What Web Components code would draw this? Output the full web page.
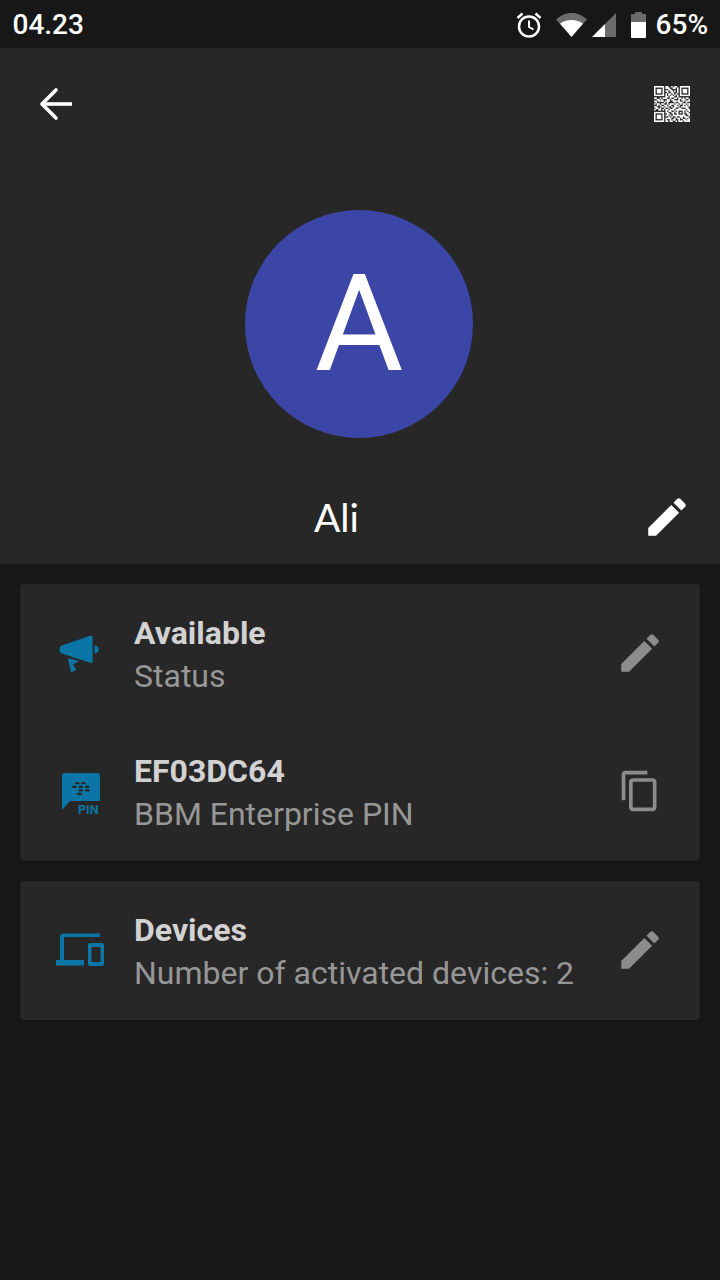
<!DOCTYPE html>
<html>
<head>
<meta charset="utf-8">
<title>Profile</title>
<style>
    html, body { margin: 0; padding: 0; background: #171717; }
    body { width: 720px; height: 1280px; overflow: hidden; font-family: Roboto, sans-serif; }
</style>
</head>
<body>
<status-bar time="04.23" battery="65%"></status-bar>
<profile-header name="Ali" initial="A"></profile-header>
<info-card>
    <info-row title="Available" subtitle="Status" icon="megaphone" action="edit"></info-row>
    <info-row title="EF03DC64" subtitle="BBM Enterprise PIN" icon="pin" action="copy"></info-row>
</info-card>
<info-card>
    <info-row title="Devices" subtitle="Number of activated devices: 2" icon="devices" action="edit"></info-row>
</info-card>

<script>
const PENCIL = 'M3 17.25V21h3.75L17.81 9.94l-3.75-3.75L3 17.25zM20.71 7.04c.39-.39.39-1.02 0-1.41l-2.34-2.34c-.39-.39-1.02-.39-1.41 0l-1.83 1.83 3.75 3.75 1.83-1.83z';
const COPY = 'M16 1H4c-1.1 0-2 .9-2 2v14h2V3h12V1zm3 4H8c-1.1 0-2 .9-2 2v14c0 1.1.9 2 2 2h11c1.1 0 2-.9 2-2V7c0-1.1-.9-2-2-2zm0 16H8V7h11v14z';

const ICONS = {
    megaphone: `<svg style="margin:10px 0 0 4px" width="48" height="48" viewBox="0 0 48 48" fill="#0a76a6">
        <path d="M3 11.500 31 1.800c1.400-.5 2.600.4 2.600 1.800v23.500c0 1.300-1 2-2.300 1.700L3 19.500c-1.700-.5-2.500-1.700-2.500-4s.8-3.500 2.500-4z"/>
        <path d="M35.500 11.500c2.700.3 4.300 1.700 4.300 4s-1.600 3.700-4.300 4z"/>
        <path d="M8.800 24.300 20 27 14 30.500l3.500 5.500-5.300 2.300z"/>
    </svg>`,
    pin: `<svg style="margin:8px 0 0 3px" width="48" height="48" viewBox="0 0 48 48">
        <path fill="#0a76a6" d="M7 2h32c2 0 3 1 3 3v25H12l-8 9V5c0-2 1-3 3-3z"/>
        <g fill="#272727">
            <rect x="17" y="11" width="4.500" height="2.200" rx="1"/><rect x="23" y="11" width="4.500" height="2.200" rx="1"/>
            <rect x="14" y="14.800" width="4.500" height="2.200" rx="1"/><rect x="20.500" y="14.800" width="4.500" height="2.200" rx="1"/><rect x="27" y="14.800" width="4.500" height="2.200" rx="1"/>
            <rect x="20.500" y="18.300" width="4.500" height="2.200" rx="1"/><rect x="27" y="18.300" width="4.500" height="2.200" rx="1"/>
            <rect x="19" y="21.800" width="5" height="2.200" rx="1"/>
        </g>
        <text x="20" y="43" font-family="Roboto, sans-serif" font-weight="700" font-size="12.500" fill="#0a76a6">PIN</text>
    </svg>`,
    devices: `<svg style="margin:-2px 2px 0 0" width="48" height="36" viewBox="0 0 48 36" fill="#0a76a6">
        <path d="M4 6c0-2 1.500-3.500 3.500-3.500H44V6H8v23H28v5.500H0V29h4z"/>
        <path fill-rule="evenodd" d="M34 12h12c1.200 0 2 .8 2 2v19c0 1.200-.8 2-2 2H34c-1.200 0-2-.8-2-2V14c0-1.200.8-2 2-2zm1.500 4v15h9V16z"/>
    </svg>`
};

// 25 modules, like a version 2 code
const QR_ROWS = [
    '1111111011001011001111111',
    '1000001011100110101000001',
    '1011101000110000101011101',
    '1011101011011010101011101',
    '1011101001001100101011101',
    '1000001010110101001000001',
    '1111111010101010101111111',
    '0000000011011100100000000',
    '1100101110010011011010110',
    '0011010001101100010111001',
    '1101111011100111110010111',
    '0100000101000010011100100',
    '1011011001011101101011011',
    '0010100110110011010010101',
    '1100011011001011100111110',
    '0110100100100110011000110',
    '1001101011011101111111011',
    '0000000010110010100010101',
    '1111111011001101101010110',
    '1000001001100100100010011',
    '1011101011010111111111001',
    '1011101000101001001101110',
    '1011101011110010110100101',
    '1000001010010110010011011',
    '1111111011011001011101111'
];

function qrPath() {
    let d = '';
    QR_ROWS.forEach((row, y) => {
        [...row].forEach((c, x) => {
            if (c === '1') d += `M${x} ${y}h1v1h-1z`;
        });
    });
    return d;
}

class StatusBar extends HTMLElement {
    constructor() {
        super();
        this.attachShadow({ mode: 'open' });
    }

    connectedCallback() {
        this.shadowRoot.innerHTML = `
            <style>
                :host {
                    display: flex;
                    align-items: center;
                    height: 48px;
                    background: #171717;
                    color: #fff;
                    padding: 1px 12px 0 12.500px;
                    box-sizing: border-box;
                    font-family: Roboto, sans-serif;
                    font-weight: 500;
                    font-size: 28px;
                }
                .time { flex: 1; }
                .icons { display: flex; align-items: center; }
                svg { display: block; }
                .alarm { margin-right: 14px; }
                .wifi { margin-right: 5px; }
                .signal { margin-right: 15px; }
                .battery { margin-right: 10px; }
            </style>
            <span class="time">${this.getAttribute('time')}</span>
            <div class="icons">
                <svg class="alarm" width="26" height="26" viewBox="0 0 26 26" fill="none" stroke="#fff">
                    <circle cx="13" cy="14.500" r="10" stroke-width="2.500"/>
                    <path d="M13 8.500v6.500l4.500 2.500" stroke-width="2"/>
                    <path d="M1.500 6 6.500 1.500M24.500 6l-5-4.500" stroke-width="2.500"/>
                </svg>
                <svg class="wifi" width="31" height="24" viewBox="0 0 31 24">
                    <path fill="#6b6b6b" d="M0 6.500C4 2.700 9.500 0 15.500 0S27 2.700 31 6.500L27 11H4z"/>
                    <path fill="#fff" d="M4 10.700C7 8.300 11 7 15.500 7S24 8.300 27 10.700L15.500 24z"/>
                </svg>
                <svg class="signal" width="24" height="24" viewBox="0 0 24 24">
                    <path fill="#6b6b6b" d="M24 0v24H13V11z"/>
                    <path fill="#fff" d="M13 11v13H0z"/>
                </svg>
                <svg class="battery" width="15" height="26" viewBox="0 0 15 26">
                    <path fill="#6b6b6b" d="M4 2V0h7v2h3c.6 0 1 .4 1 1v7H0V3c0-.6.4-1 1-1z"/>
                    <path fill="#fff" d="M0 10h15v15c0 .6-.4 1-1 1H1c-.6 0-1-.4-1-1z"/>
                </svg>
                <span>${this.getAttribute('battery')}</span>
            </div>
        `;
    }
}

class ProfileHeader extends HTMLElement {
    constructor() {
        super();
        this.attachShadow({ mode: 'open' });
    }

    connectedCallback() {
        this.shadowRoot.innerHTML = `
            <style>
                :host {
                    display: block;
                    height: 516px;
                    background: #272727;
                    color: #fff;
                    font-family: Roboto, sans-serif;
                }
                svg { display: block; }
                .top {
                    display: flex;
                    justify-content: space-between;
                    padding: 38px 30px 0 38px;
                }
                .avatar {
                    width: 228px;
                    height: 228px;
                    border-radius: 50%;
                    background: #3c46a6;
                    margin: 88px auto 0 245px;
                    display: flex;
                    align-items: center;
                    justify-content: center;
                    font-size: 136px;
                    line-height: 1;
                }
                .name-row {
                    display: flex;
                    align-items: center;
                    margin-top: 52px;
                    padding: 0 28px 0 314px;
                }
                .name { flex: 1; font-family: Lato, sans-serif; font-size: 39px; line-height: 54px; }
            </style>
            <div class="top">
                <svg width="36" height="36" viewBox="0 0 36 36" fill="none" stroke="#fff" stroke-width="3.600" stroke-linejoin="round">
                    <path d="M34 18H4"/>
                    <path d="M18 4 4 18l14 14" stroke-linecap="round"/>
                </svg>
                <svg width="36" height="36" viewBox="0 0 25 25"><path fill="#fff" stroke="#fff" stroke-width="0.1" d="${qrPath()}"/></svg>
            </div>
            <div class="avatar">${this.getAttribute('initial')}</div>
            <div class="name-row">
                <span class="name">${this.getAttribute('name')}</span>
                <svg width="50" height="50" viewBox="0 0 24 24" fill="#fff"><path d="${PENCIL}"/></svg>
            </div>
        `;
    }
}

class InfoCard extends HTMLElement {
    constructor() {
        super();
        this.attachShadow({ mode: 'open' }).innerHTML = `
            <style>
                :host {
                    display: block;
                    margin: 20px 20px 0;
                    padding-bottom: 1px;
                    background: #272727;
                    border-radius: 4px;
                    box-shadow: 0 1px 2px rgba(0,0,0,0.3);
                }
            </style>
            <slot></slot>
        `;
    }
}

class InfoRow extends HTMLElement {
    constructor() {
        super();
        this.attachShadow({ mode: 'open' });
    }

    connectedCallback() {
        const action = this.getAttribute('action');
        const actionSvg = action === 'copy'
            ? `<svg width="44" height="44" viewBox="0 0 24 24" fill="#8c8c8c"><path d="${COPY}"/></svg>`
            : `<svg width="50" height="50" viewBox="0 0 24 24" fill="#8c8c8c"><path d="${PENCIL}"/></svg>`;

        this.shadowRoot.innerHTML = `
            <style>
                :host {
                    display: flex;
                    align-items: center;
                    height: 138px;
                    font-family: Roboto, sans-serif;
                }
                .icon {
                    width: 114px;
                    flex: none;
                    display: flex;
                    justify-content: center;
                    padding-left: 7px;
                    box-sizing: border-box;
                }
                .text { flex: 1; min-width: 0; padding-top: 4px; }
                .title {
                    font-size: 32px;
                    font-weight: 700;
                    line-height: 42px;
                    color: #d2d2d2;
                }
                .subtitle {
                    font-size: 32px;
                    line-height: 44px;
                    color: #979797;
                }
                .action { width: 120px; flex: none; display: flex; justify-content: center; }
                svg { display: block; }
            </style>
            <div class="icon">${ICONS[this.getAttribute('icon')]}</div>
            <div class="text">
                <div class="title">${this.getAttribute('title')}</div>
                <div class="subtitle">${this.getAttribute('subtitle')}</div>
            </div>
            <div class="action">${actionSvg}</div>
        `;
    }
}

customElements.define('status-bar', StatusBar);
customElements.define('profile-header', ProfileHeader);
customElements.define('info-card', InfoCard);
customElements.define('info-row', InfoRow);
</script>
</body>
</html>
